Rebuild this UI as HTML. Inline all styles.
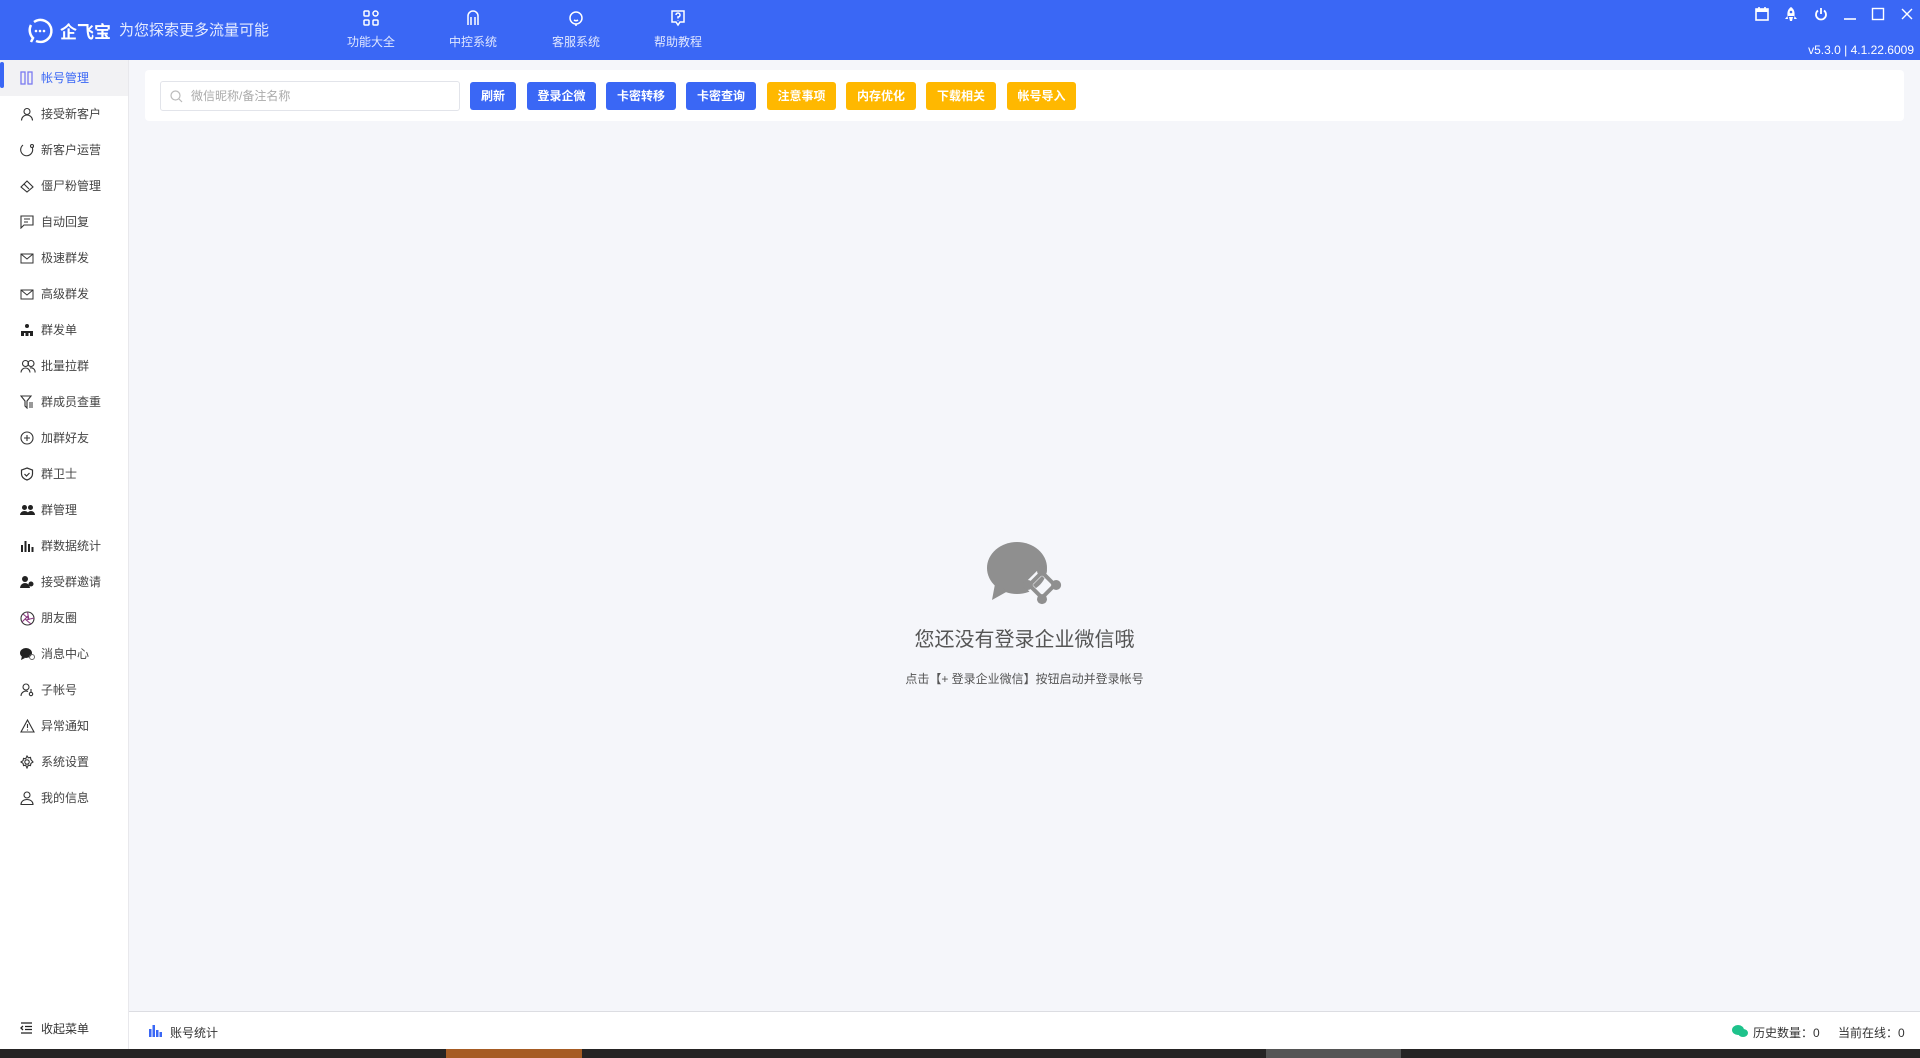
<!DOCTYPE html>
<html><head><meta charset="utf-8"><style>
*{margin:0;padding:0;box-sizing:border-box}
body{width:1920px;height:1058px;overflow:hidden;background:#f5f6fa;font-family:"Liberation Sans","Noto Sans CJK SC",sans-serif;position:relative;color:#333}
.hdr{position:absolute;left:0;top:0;width:1920px;height:60px;background:#3a67f5;color:#fff}
.logo{position:absolute;left:26px;top:16px}
.brand{position:absolute;left:60px;top:18px;font-size:17px;font-weight:bold}
.tag{position:absolute;left:119px;top:19px;font-size:15px;color:#e6ecff}
.nav{position:absolute;top:9px;width:80px;text-align:center;font-size:12px;color:#e0e7ff}
.nav svg{display:block;margin:0 auto 6px}
.ctl{position:absolute;top:7px}
.ver{position:absolute;right:6px;top:43px;font-size:12px;color:#fff}
.side{position:absolute;left:0;top:60px;width:129px;height:989px;background:#fff;border-right:1px solid #e8e8ec}
.it{height:36px;line-height:36px;font-size:12px;color:#444;padding-left:41px;position:relative}
.it.on{background:#f2f2f4;color:#3a67f5}
.it.on:before{content:"";position:absolute;left:0;top:2px;width:4px;height:26px;background:#3a67f5;border-radius:2px}
.it svg{position:absolute;left:20px;top:11px}
.card{position:absolute;left:145px;top:70px;width:1759px;height:51px;background:#fff;border-radius:4px}
.search{position:absolute;left:15px;top:11px;width:300px;height:30px;border:1px solid #e2e4ea;border-radius:3px;font-size:12px;color:#aaa;line-height:28px;padding-left:30px}
.search svg{position:absolute;left:9px;top:8px}
.btn{position:absolute;top:12px;height:28px;line-height:28px;border-radius:3px;color:#fff;font-size:12px;font-weight:bold;text-align:center;background:#3a67f5}
.o{background:#ffb800}
.empty{position:absolute;left:129px;right:0;top:540px;text-align:center}
.t1{font-size:20px;color:#555;margin-top:12px}
.t2{font-size:12px;color:#555;margin-top:18px}
.bot{position:absolute;left:129px;top:1011px;width:1791px;height:38px;background:#fff;border-top:1px solid #dcdde2;font-size:12px;color:#333}
.task{position:absolute;left:0;top:1049px;width:1920px;height:9px;background:#262424}
</style></head><body>
<div class="hdr">
<svg class="logo" width="28" height="28" viewBox="0 0 28 28"><path d="M8 6a11 11 0 1 1 2 19" fill="none" stroke="#fff" stroke-width="2.5"/><path d="M5 9a11 11 0 0 0 2 13l-2 4" fill="none" stroke="#fff" stroke-width="2.5"/><circle cx="10" cy="15" r="1.3" fill="#fff"/><circle cx="14" cy="15" r="1.3" fill="#fff"/><circle cx="18" cy="15" r="1.3" fill="#fff"/></svg>
<div class="brand">企飞宝</div><div class="tag">为您探索更多流量可能</div>
<div class="nav" style="left:331px"><svg width="18" height="18" viewBox="0 0 18 18" fill="none" stroke="#fff" stroke-width="1.5"><rect x="2" y="2" width="5" height="5" rx="1"/><rect x="11" y="2" width="5" height="5" rx="2.5"/><rect x="2" y="11" width="5" height="5" rx="1"/><rect x="11" y="11" width="5" height="5" rx="1"/></svg>功能大全</div>
<div class="nav" style="left:433px"><svg width="18" height="18" viewBox="0 0 18 18" fill="none" stroke="#fff" stroke-width="1.5"><path d="M9 2a5 5 0 0 1 5 5v9M9 2a5 5 0 0 0-5 5v9M7 8v8M11 8v8"/></svg>中控系统</div>
<div class="nav" style="left:536px"><svg width="18" height="18" viewBox="0 0 18 18" fill="none" stroke="#fff" stroke-width="1.5"><circle cx="9" cy="9" r="6"/><path d="M7 11q2 1.5 4 0M9 15v2"/></svg>客服系统</div>
<div class="nav" style="left:638px"><svg width="18" height="18" viewBox="0 0 18 18" fill="none" stroke="#fff" stroke-width="1.5"><path d="M3 2h12v11H11l-2 3-2-3H3z"/><path d="M7 6a2 2 0 1 1 2 2v1.5M9 11v.5"/></svg>帮助教程</div>
<svg class="ctl" style="left:1755px" width="14" height="14" viewBox="0 0 14 14"><rect x="1" y="2" width="12" height="11" fill="none" stroke="#fff" stroke-width="1.6"/><rect x="1" y="2" width="12" height="3" fill="#fff"/><path d="M4 0v3M10 0v3" stroke="#fff" stroke-width="1.6"/></svg>
<svg class="ctl" style="left:1784px" width="14" height="15" viewBox="0 0 14 15"><path d="M7 0c3 2 4 5 3.5 9h-7C3 5 4 2 7 0zM3.5 9L1 12h3zM10.5 9L13 12h-3zM5 10h4l-1 4H6z" fill="#fff"/><circle cx="7" cy="5" r="1.3" fill="#3a67f5"/></svg>
<svg class="ctl" style="left:1814px" width="14" height="14" viewBox="0 0 14 14" fill="none" stroke="#fff" stroke-width="1.8"><path d="M4 3.5a5 5 0 1 0 6 0M7 1v6"/></svg>
<svg class="ctl" style="left:1843px" width="14" height="14"><path d="M1 12h12" stroke="#fff" stroke-width="1.6"/></svg>
<svg class="ctl" style="left:1871px" width="14" height="14"><rect x="1.5" y="1.5" width="11" height="11" fill="none" stroke="#fff" stroke-width="1.4"/></svg>
<svg class="ctl" style="left:1900px" width="14" height="14"><path d="M2 2l10 10M12 2L2 12" stroke="#fff" stroke-width="1.4"/></svg>
<div class="ver">v5.3.0 | 4.1.22.6009</div>
</div>
<div class="side">
<div class="it on"><svg width="14" height="14" viewBox="0 0 14 14" fill="none" stroke="#7b7bf0" stroke-width="1.3"><rect x="1" y="1" width="4" height="12"/><rect x="8" y="1" width="4" height="12"/></svg>帐号管理</div>
<div class="it"><svg width="14" height="14" viewBox="0 0 14 14" fill="none" stroke="#333" stroke-width="1.1"><circle cx="7" cy="4.5" r="3"/><path d="M1.5 13.5a5.5 5.5 0 0 1 11 0"/></svg>接受新客户</div>
<div class="it"><svg width="14" height="14" viewBox="0 0 14 14" fill="none" stroke="#333" stroke-width="1.1"><path d="M3 2a6 6 0 1 0 9 2"/><circle cx="12" cy="3" r="1.5"/></svg>新客户运营</div>
<div class="it"><svg width="14" height="14" viewBox="0 0 14 14" fill="none" stroke="#333" stroke-width="1.1"><path d="M1 8l6-6 6 6-6 5z"/><path d="M4 5l5 5"/></svg>僵尸粉管理</div>
<div class="it"><svg width="14" height="14" viewBox="0 0 14 14" fill="none" stroke="#333" stroke-width="1.1"><path d="M1 1h12v9H4l-3 3z"/><path d="M4 4h6M4 7h4"/></svg>自动回复</div>
<div class="it"><svg width="14" height="14" viewBox="0 0 14 14" fill="none" stroke="#333" stroke-width="1"><rect x="1" y="3" width="12" height="9"/><path d="M1 3l6 5 6-5"/></svg>极速群发</div>
<div class="it"><svg width="14" height="14" viewBox="0 0 14 14" fill="none" stroke="#333" stroke-width="1"><rect x="1" y="3" width="12" height="9"/><path d="M1 3l6 5 6-5"/></svg>高级群发</div>
<div class="it"><svg width="14" height="14" viewBox="0 0 14 14" fill="#222"><circle cx="7" cy="3" r="2"/><rect x="1" y="8" width="12" height="2"/><rect x="1" y="10" width="3" height="3"/><rect x="5.5" y="10" width="3" height="3"/><rect x="10" y="10" width="3" height="3"/></svg>群发单</div>
<div class="it"><svg width="16" height="14" viewBox="0 0 16 14" fill="none" stroke="#333" stroke-width="1.1"><circle cx="5.5" cy="4.5" r="3"/><circle cx="11" cy="4.5" r="3"/><path d="M1 13.5a4.5 4.5 0 0 1 9 0M10 9a4 4 0 0 1 5 4.5"/></svg>批量拉群</div>
<div class="it"><svg width="14" height="14" viewBox="0 0 14 14" fill="none" stroke="#333" stroke-width="1.1"><path d="M1 1h10L7 6v7L5 11V6z"/><path d="M9 8h4M9 10h4M9 12h4"/></svg>群成员查重</div>
<div class="it"><svg width="14" height="14" viewBox="0 0 14 14" fill="none" stroke="#333" stroke-width="1.1"><circle cx="7" cy="7" r="6"/><path d="M7 4v6M4 7h6"/></svg>加群好友</div>
<div class="it"><svg width="14" height="14" viewBox="0 0 14 14" fill="none" stroke="#333" stroke-width="1.2"><path d="M7 1l5.5 2v4c0 3-2.5 5-5.5 6-3-1-5.5-3-5.5-6V3z"/><path d="M4.5 7l2 2 3-3"/></svg>群卫士</div>
<div class="it"><svg width="15" height="14" viewBox="0 0 15 14" fill="#222"><circle cx="4.5" cy="4.5" r="2.5"/><circle cx="10.5" cy="4.5" r="2.5"/><path d="M0 12a4.5 4 0 0 1 9 0zM7 12a4 4 0 0 1 8 0z"/></svg>群管理</div>
<div class="it"><svg width="14" height="14" viewBox="0 0 14 14" fill="#222"><rect x="1" y="6" width="2" height="7"/><rect x="4.5" y="2" width="2" height="11"/><rect x="8" y="5" width="2" height="8"/><rect x="11.5" y="8" width="2" height="5"/></svg>群数据统计</div>
<div class="it"><svg width="15" height="14" viewBox="0 0 15 14" fill="#222"><circle cx="5" cy="4" r="3"/><path d="M0 13a5 5 0 0 1 10 0z"/><circle cx="11" cy="9" r="2.5"/></svg>接受群邀请</div>
<div class="it"><svg width="15" height="15" viewBox="0 0 15 15" fill="none" stroke="#333" stroke-width="1.1"><circle cx="7.5" cy="7.5" r="6.5"/><path d="M7.5 1L9 9M14 7L6 9M11 13L5 8M2 11l6-6M3 3l6 5" stroke="#8a3a80"/></svg>朋友圈</div>
<div class="it"><svg width="15" height="14" viewBox="0 0 15 14" fill="#222"><ellipse cx="6" cy="6" rx="6" ry="5"/><path d="M2 9l-1 4 4-2z"/><circle cx="12" cy="10" r="2.5" fill="none" stroke="#666"/></svg>消息中心</div>
<div class="it"><svg width="14" height="14" viewBox="0 0 14 14" fill="none" stroke="#333" stroke-width="1.1"><circle cx="6" cy="4" r="3"/><path d="M1 13a5 5 0 0 1 7-4.5"/><circle cx="11" cy="11" r="1.7"/><path d="M11 9V6"/></svg>子帐号</div>
<div class="it"><svg width="15" height="14" viewBox="0 0 15 14" fill="none" stroke="#333" stroke-width="1.1"><path d="M7.5 1L14 13H1z"/><path d="M7.5 5v4M7.5 10.5v1"/></svg>异常通知</div>
<div class="it"><svg width="14" height="14" viewBox="0 0 14 14" fill="none" stroke="#333" stroke-width="1.1"><circle cx="7" cy="7" r="2.2"/><path d="M7 1l1.3 1.8 2.2-.4.4 2.2L13 7l-2.1 1.4-.4 2.2-2.2-.4L7 13l-1.3-2.8-2.2.4-.4-2.2L1 7l2.1-1.4.4-2.2 2.2.4z"/></svg>系统设置</div>
<div class="it"><svg width="14" height="14" viewBox="0 0 14 14" fill="none" stroke="#333" stroke-width="1.1"><circle cx="7" cy="4" r="3"/><path d="M1 13.5c0-3 2.5-5 6-5s6 2 6 5z"/></svg>我的信息</div>
<div style="position:absolute;left:20px;top:960px;font-size:12px;color:#333"><svg width="13" height="12" style="vertical-align:-1px;margin-right:8px" viewBox="0 0 13 12" fill="none" stroke="#222" stroke-width="1.3"><path d="M1 1h11M5 4.5h7M5 7.5h7M1 11h11M3 4l-2 2 2 2"/></svg>收起菜单</div>
</div>
<div class="card">
<div class="search"><svg width="13" height="13" viewBox="0 0 13 13" fill="none" stroke="#bbb" stroke-width="1.2"><circle cx="5.5" cy="5.5" r="4.5"/><path d="M9 9l3 3"/></svg>微信昵称/备注名称</div>
<div class="btn" style="left:325px;width:46px">刷新</div>
<div class="btn" style="left:382px;width:69px">登录企微</div>
<div class="btn" style="left:461px;width:70px">卡密转移</div>
<div class="btn" style="left:541px;width:70px">卡密查询</div>
<div class="btn o" style="left:622px;width:69px">注意事项</div>
<div class="btn o" style="left:701px;width:70px">内存优化</div>
<div class="btn o" style="left:781px;width:70px">下载相关</div>
<div class="btn o" style="left:862px;width:69px">帐号导入</div>
</div>
<div class="empty">
<svg width="76" height="66" viewBox="0 0 76 66"><ellipse cx="30" cy="28" rx="30" ry="26" fill="#8f8f8f"/><path d="M8 44l-3 16 16-9z" fill="#8f8f8f"/><g transform="translate(55,45) rotate(45)"><rect x="-10" y="-10" width="20" height="20" rx="3" fill="none" stroke="#f5f6fa" stroke-width="7"/><rect x="-9" y="-9" width="18" height="18" rx="3" fill="none" stroke="#8f8f8f" stroke-width="4"/><circle cx="-10" cy="-10" r="5" fill="#8f8f8f"/><circle cx="10" cy="10" r="5" fill="#8f8f8f"/><circle cx="10" cy="-10" r="5" fill="#8f8f8f"/><circle cx="-10" cy="10" r="5" fill="#8f8f8f"/></g></svg>
<div class="t1">您还没有登录企业微信哦</div>
<div class="t2">点击【+ 登录企业微信】按钮启动并登录帐号</div>
</div>
<div class="bot">
<svg style="position:absolute;left:20px;top:13px" width="13" height="12" viewBox="0 0 13 12" fill="#3a67f5"><rect x="0" y="4" width="2.5" height="8"/><rect x="3.5" y="0" width="2.5" height="12"/><rect x="7" y="5" width="2.5" height="7"/><rect x="10.5" y="7" width="2.5" height="5"/></svg>
<span style="position:absolute;left:41px;top:12px">账号统计</span>
<svg style="position:absolute;left:1603px;top:12px" width="16" height="14" viewBox="0 0 16 14" fill="#1ec28b"><ellipse cx="6" cy="6" rx="6" ry="5"/><ellipse cx="11" cy="9" rx="5" ry="4"/></svg>
<span style="position:absolute;left:1624px;top:12px">历史数量：0</span>
<span style="position:absolute;left:1709px;top:12px">当前在线：0</span>
</div>
<div class="task"><div style="position:absolute;left:446px;width:136px;height:9px;background:#a65c24"></div><div style="position:absolute;left:1266px;width:135px;height:9px;background:#555"></div></div>
</body></html>
